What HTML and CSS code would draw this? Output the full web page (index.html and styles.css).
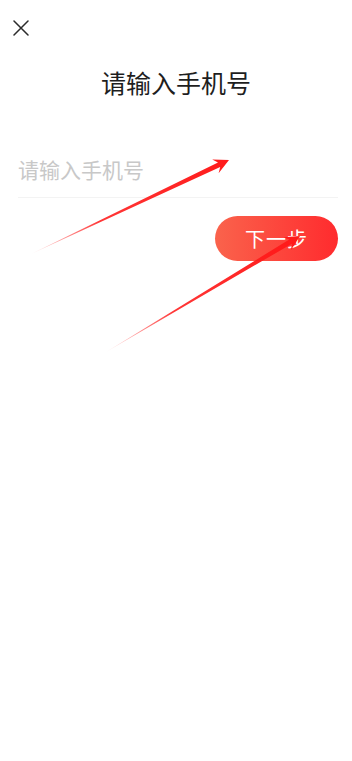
FILE: index.html
```html
<!DOCTYPE html>
<html lang="zh-CN">
<head>
<meta charset="utf-8">
<meta name="viewport" content="width=device-width, initial-scale=1">
<title>请输入手机号</title>
<link rel="stylesheet" href="styles.css">
</head>
<body>
<div class="page">
  <div class="topbar">
    <svg class="close" viewBox="0 0 16 16" width="16" height="16" aria-label="关闭">
      <path d="M1 1 L15 15 M15 1 L1 15" stroke="#2b2b2b" stroke-width="1.5" stroke-linecap="round" fill="none"/>
    </svg>
  </div>
  <h1 class="title">请输入手机号</h1>
  <div class="field">
    <span class="placeholder">请输入手机号</span>
  </div>
  <div class="actions">
    <button class="next">下一步</button>
  </div>
</div>
<svg class="annotations" viewBox="0 0 352 761" width="352" height="761">
  <defs>
    <linearGradient id="g1" gradientUnits="userSpaceOnUse" x1="31" y1="254" x2="229" y2="160">
      <stop offset="0" stop-color="#ff2020" stop-opacity="0.1"/>
      <stop offset="0.35" stop-color="#ff2020" stop-opacity="0.9"/>
      <stop offset="1" stop-color="#ff1a1a"/>
    </linearGradient>
    <linearGradient id="g2" gradientUnits="userSpaceOnUse" x1="106" y1="352" x2="300" y2="236">
      <stop offset="0" stop-color="#ff2020" stop-opacity="0.1"/>
      <stop offset="0.35" stop-color="#ff2020" stop-opacity="0.9"/>
      <stop offset="1" stop-color="#ff1a1a"/>
    </linearGradient>
  </defs>
  <polygon fill="url(#g1)" points="31,254 220.2,167 218.6,173.2 229,160 212.2,159.6 218,162.4"/>
  <polygon fill="url(#g2)" points="106,352 291.9,243.7 291,250.1 300,236 283.3,237.3 289.3,239.5"/>
</svg>
</body>
</html>
```
FILE: styles.css
```css
html, body {
  margin: 0;
  padding: 0;
  background: #ffffff;
}
body {
  font-family: "Noto Sans CJK SC", "Noto Sans", sans-serif;
  color: #222222;
}
.page {
  width: 352px;
  min-height: 761px;
  display: flex;
  flex-direction: column;
}
.topbar {
  height: 56px;
  padding-left: 13px;
  padding-top: 20px;
  box-sizing: border-box;
}
.close {
  display: block;
  width: 16px;
  height: 16px;
}
.title {
  margin: 10px 0 0;
  font-size: 25px;
  line-height: 32px;
  font-weight: 400;
  text-align: center;
  color: #1e1e1e;
}
.field {
  margin: 52px 14px 0 18px;
  padding: 5px 0 14px;
  border-bottom: 1px solid #f3f3f3;
}
.placeholder {
  display: block;
  font-size: 21px;
  line-height: 28px;
  color: #c8c8c8;
}
.actions {
  display: flex;
  justify-content: flex-end;
  margin: 18px 14px 0 0;
}
.next {
  width: 123px;
  height: 45px;
  border: none;
  border-radius: 23px;
  background: linear-gradient(90deg, #fa634c 0%, #ff2b2e 100%);
  color: #ffffff;
  font-family: "Noto Sans CJK SC", "Noto Sans", sans-serif;
  font-size: 20px;
  line-height: 45px;
  padding: 0;
  letter-spacing: 1px;
}
.annotations {
  position: absolute;
  left: 0;
  top: 0;
  pointer-events: none;
}
```
